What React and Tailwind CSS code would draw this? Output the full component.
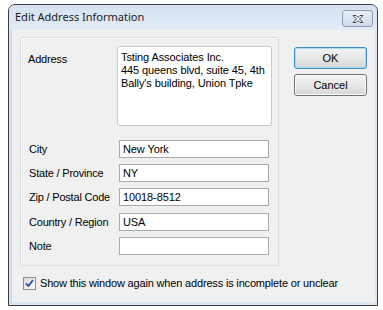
import React from 'react';

const body = { fontFamily: '"Liberation Sans", Arial, sans-serif' };

function CloseGlyph() {
  return (
    <svg width="14" height="10" viewBox="0 0 14 10">
      <path
        d="M2 1.5 L5 1.5 L7 3.5 L9 1.5 L12 1.5 L8.5 5 L12 8.5 L9 8.5 L7 6.5 L5 8.5 L2 8.5 L5.5 5 Z"
        fill="#ffffff"
        stroke="#3a4556"
        strokeWidth="1"
        strokeLinejoin="round"
      />
    </svg>
  );
}

function Check() {
  return (
    <div className="w-[13px] h-[13px] border border-[#8f8f8f] bg-gradient-to-br from-[#dcdcdc] to-[#fbfbfb] flex items-center justify-center">
      <svg width="9" height="9" viewBox="0 0 9 9">
        <path d="M1 4.5 L3.5 7 L8 1" fill="none" stroke="#2a4ea8" strokeWidth="1.8" />
      </svg>
    </div>
  );
}

function Field({ label, value, top }) {
  return (
    <div className={`flex items-center h-[18px] ${top}`}>
      <div className="w-[98px] pl-[8px] text-[11px] tracking-[-0.2px] text-black leading-[13px]">{label}</div>
      <div className="w-[150px] h-[18px] border border-[#a9a9a9] bg-white pl-[3px] text-[11px] tracking-[-0.1px] leading-[16px] text-black">
        {value}
      </div>
    </div>
  );
}

function Btn({ children, focused }) {
  return (
    <div
      className={`w-[73px] h-[22px] rounded-[3px] border flex items-center justify-center text-[11px] text-black bg-gradient-to-b from-[#f4f4f4] via-[#e8e8e8] to-[#d6d6d6] ${
        focused ? 'border-[#3c8cc8] shadow-[inset_0_0_0_1px_#a8dcf6]' : 'border-[#707070] shadow-[inset_0_0_0_1px_#fbfbfb]'
      }`}
    >
      {children}
    </div>
  );
}

export default function App() {
  return (
    <div className="w-[383px] h-[310px] bg-white pt-[4px] pl-[8px]" style={body}>
      <div className="w-[370px] h-[302px] flex flex-col border border-[#3c3c3c] rounded-t-[7px] bg-[#d9e5f2] overflow-hidden">
        <div className="h-[25px] flex items-center justify-between pl-[6px] pr-[4px] bg-gradient-to-b from-[#d6e2f0] to-[#e2ebf6]">
          <span className="text-[11px] text-[#1c1c1c]" style={{ fontFamily: '"Noto Sans", "Open Sans", sans-serif' }}>
            Edit Address Information
          </span>
          <div className="w-[31px] h-[17px] mt-[2px] rounded-[3px] border border-[#8d9bb0] bg-gradient-to-b from-[#e8eef6] to-[#cfdbea] flex items-center justify-center">
            <CloseGlyph />
          </div>
        </div>
        <div className="flex-1 mx-[2px] mb-[3px] bg-[#f0f0f0] border-l border-[#c7d4e3] flex flex-col">
          <div className="flex">
            <div className="ml-[8px] mt-[7px] w-[259px] h-[229px] rounded-[3px] border border-[#d5dfe5] shadow-[inset_1px_1px_0_#ffffff] flex flex-col">
              <div className="flex mt-[8px]">
                <div className="w-[96px] pl-[7px] pt-[7px] text-[11px] tracking-[-0.2px] leading-[13px] text-black">Address</div>
                <div className="w-[155px] h-[80px] rounded-[2px] border border-[#c6ccd4] bg-white pl-[3px] pt-[4px] text-[11px] tracking-[-0.1px] leading-[13px] text-black whitespace-pre">
                  {'Tsting Associates Inc.\n445 queens blvd, suite 45, 4th\nBally\'s building, Union Tpke'}
                </div>
              </div>
              <Field label="City" value="New York" top="mt-[14px]" />
              <Field label="State / Province" value="NY" top="mt-[6px]" />
              <Field label="Zip / Postal Code" value="10018-8512" top="mt-[6px]" />
              <Field label="Country / Region" value="USA" top="mt-[7px]" />
              <Field label="Note" value="" top="mt-[6px]" />
            </div>
            <div className="ml-[15px] mt-[17px] flex flex-col gap-[5px]">
              <Btn focused>OK</Btn>
              <Btn>Cancel</Btn>
            </div>
          </div>
          <div className="flex items-center gap-[4px] ml-[11px] mt-[11px]">
            <Check />
            <span className="text-[11px] tracking-[-0.17px] text-black leading-[13px]">
              Show this window again when address is incomplete or unclear
            </span>
          </div>
        </div>
      </div>
    </div>
  );
}
